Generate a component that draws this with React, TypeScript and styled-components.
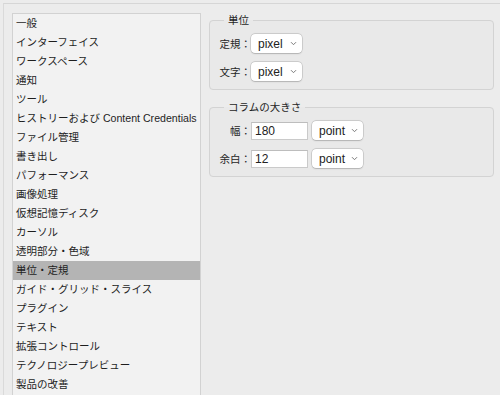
import React from "react";
import styled, { createGlobalStyle } from "styled-components";

const Global = createGlobalStyle`
  html, body { margin: 0; padding: 0; background: #ececec; }
  body {
    font-family: "Liberation Sans", "Noto Sans CJK JP", sans-serif;
    color: #222;
  }
`;

const Page = styled.div`
  width: 500px;
  height: 395px;
  overflow: hidden;
  box-sizing: border-box;
  padding: 3px 0 0 3px;
`;

const Frame = styled.div`
  height: 420px;
  box-sizing: border-box;
  border-top: 1px solid #d6d6d6;
  border-left: 1px solid #dadada;
  display: flex;
  align-items: flex-start;
  gap: 8px;
  padding: 9px 0 0 8px;
`;

const List = styled.div`
  width: 189px;
  height: 400px;
  box-sizing: border-box;
  border: 1px solid #d2d2d2;
  background: #f2f2f2;
  display: flex;
  flex-direction: column;
`;

const Item = styled.div<{ $selected?: boolean }>`
  height: 19px;
  line-height: 19px;
  padding-left: 3px;
  font-size: 10.5px;
  white-space: nowrap;
  color: #1e1e1e;
  background: ${(p) => (p.$selected ? "#b4b4b4" : "transparent")};
`;

const Latin = styled.span`
  font-family: "Liberation Sans", sans-serif;
  font-size: 10.6px;
`;

const Side = styled.div`
  display: flex;
  flex-direction: column;
  gap: 10px;
`;

const Group = styled.fieldset`
  margin: 0;
  width: 285px;
  box-sizing: border-box;
  border: 1px solid #d3d3d3;
  border-radius: 4px;
  background: #e9e9e9;
  padding: 7px 0 8px 8px;
  min-width: 0;
`;

const Legend = styled.legend`
  font-size: 10.5px;
  line-height: 14px;
  padding: 0 4px;
  margin-left: 6px;
  color: #1e1e1e;
`;

const Rows = styled.div`
  display: flex;
  flex-direction: column;
  gap: 9px;
`;

const Row = styled.div`
  height: 19px;
  display: flex;
  align-items: center;
`;

const Label = styled.span`
  width: 33px;
  text-align: right;
  font-size: 10.5px;
  white-space: nowrap;
  color: #262626;
`;

const Controls = styled.div`
  display: flex;
  align-items: center;
  gap: 4px;
`;

const SelectBox = styled.div<{ $w: number }>`
  width: ${(p) => p.$w}px;
  height: 19px;
  box-sizing: border-box;
  background: #ffffff;
  border-radius: 4px;
  box-shadow: 0 0 0 0.5px rgba(0, 0, 0, 0.2), 0 0.5px 1.5px rgba(0, 0, 0, 0.15);
  display: flex;
  align-items: center;
  justify-content: space-between;
  padding: 0 5px 0 7px;
  font-size: 12px;
  color: #222;
`;

const TextInput = styled.div`
  width: 57px;
  height: 18px;
  box-sizing: border-box;
  background: #ffffff;
  border: 1px solid #cacaca;
  border-top-color: #bdbdbd;
  padding-left: 3px;
  font-size: 12px;
  line-height: 16px;
  color: #222;
`;

const Chevron = () => (
  <svg width="7" height="5" viewBox="0 0 7 5">
    <path d="M1 1.2 L3.5 3.7 L6 1.2" fill="none" stroke="#7a7a7a" strokeWidth="1" />
  </svg>
);

const Select = ({ value, w }: { value: string; w: number }) => (
  <SelectBox $w={w}>
    <span>{value}</span>
    <Chevron />
  </SelectBox>
);

const items: React.ReactNode[] = [
  "一般",
  "インターフェイス",
  "ワークスペース",
  "通知",
  "ツール",
  <>
    ヒストリーおよび <Latin>Content Credentials</Latin>
  </>,
  "ファイル管理",
  "書き出し",
  "パフォーマンス",
  "画像処理",
  "仮想記憶ディスク",
  "カーソル",
  "透明部分・色域",
  "単位・定規",
  "ガイド・グリッド・スライス",
  "プラグイン",
  "テキスト",
  "拡張コントロール",
  "テクノロジープレビュー",
  "製品の改善",
];

export default function App() {
  return (
    <>
      <Global />
      <Page>
        <Frame>
          <List>
            {items.map((t, i) => (
              <Item key={i} $selected={i === 13}>
                {t}
              </Item>
            ))}
          </List>
          <Side>
            <Group>
              <Legend>単位</Legend>
              <Rows>
                <Row>
                  <Label>定規：</Label>
                  <Select value="pixel" w={51} />
                </Row>
                <Row>
                  <Label>文字：</Label>
                  <Select value="pixel" w={51} />
                </Row>
              </Rows>
            </Group>
            <Group>
              <Legend>コラムの大きさ</Legend>
              <Rows>
                <Row>
                  <Label>幅：</Label>
                  <Controls>
                    <TextInput>180</TextInput>
                    <Select value="point" w={51} />
                  </Controls>
                </Row>
                <Row>
                  <Label>余白：</Label>
                  <Controls>
                    <TextInput>12</TextInput>
                    <Select value="point" w={51} />
                  </Controls>
                </Row>
              </Rows>
            </Group>
          </Side>
        </Frame>
      </Page>
    </>
  );
}
